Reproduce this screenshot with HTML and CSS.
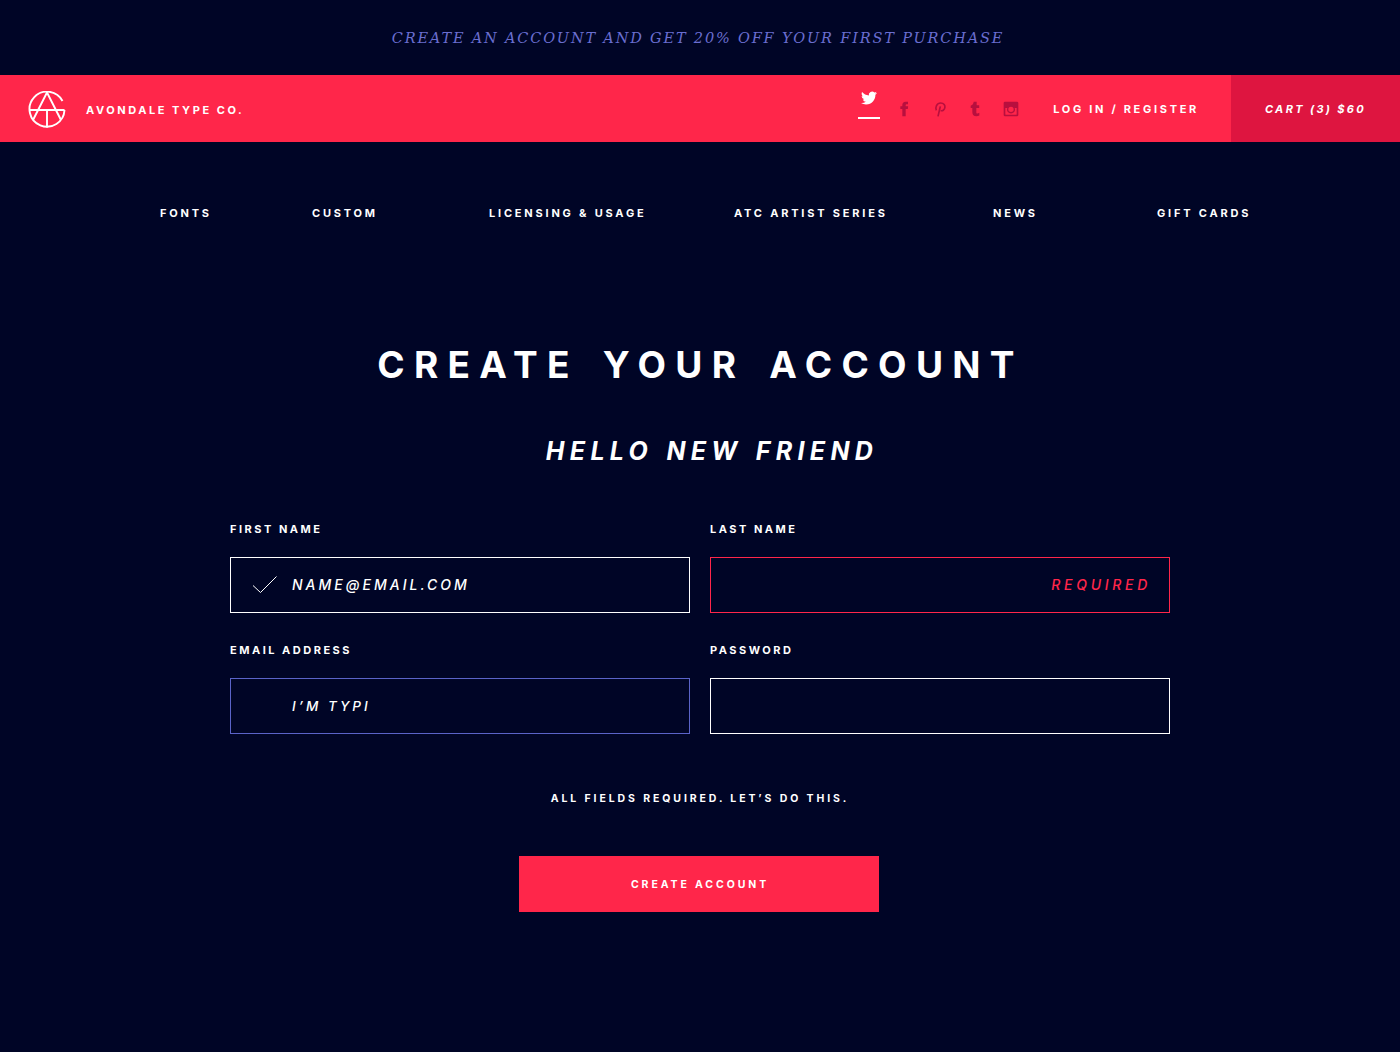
FILE: index.html
```html
<!DOCTYPE html>
<html lang="en">
<head>
  <meta charset="UTF-8">
  <title>Create your account</title>
  <link rel="stylesheet" href="styles.css">
</head>
<body>
<div class="promo">Create an account and get 20% off your first purchase</div>
<header class="topbar">
  <a class="brand" href="#">
    <svg class="logo" width="38" height="38" viewBox="0 0 38 38" fill="none" stroke="#fff" stroke-width="1.900">
      <path d="M34.500 10A17.500 17.500 0 1 0 36.500 19"/>
      <path d="M1.500 19H36.500"/>
      <path d="M19 1.500L5 29M19 1.500L33 29M19 19V36.500"/>
    </svg>
    <span class="brand-name">Avondale Type Co.</span>
  </a>
  <div class="social">
    <a class="social-link on" href="#">
      <svg width="16" height="16" viewBox="0 0 24 24"><path d="M23.950 4.570a10 10 0 0 1-2.820.780 4.960 4.960 0 0 0 2.160-2.720c-.950.550-2 .960-3.120 1.190a4.920 4.920 0 0 0-8.380 4.480C7.690 8.100 4.070 6.130 1.640 3.160a4.820 4.820 0 0 0-.670 2.480c0 1.710.870 3.210 2.190 4.100a4.900 4.900 0 0 1-2.230-.620v.060a4.920 4.920 0 0 0 3.950 4.830 5 5 0 0 1-2.210.080 4.940 4.940 0 0 0 4.600 3.420A9.870 9.870 0 0 1 0 19.540a14 14 0 0 0 7.560 2.210c9.050 0 14-7.500 14-13.980 0-.210 0-.420-.020-.630a9.940 9.940 0 0 0 2.460-2.550z"/></svg>
    </a>
    <a class="social-link" href="#">
      <svg width="16" height="16" viewBox="0 0 24 24"><path d="M14.500 8V6c0-.800.500-1.200 1.200-1.200H18V1h-3.500C11 1 9.500 3.300 9.500 6v2H6.500v4h3v11h5V12h3.200l.500-4z"/></svg>
    </a>
    <a class="social-link" href="#">
      <svg width="16" height="16" viewBox="0 0 24 24"><path class="pin" d="M6.500 14C4.500 10 7 3 13 3c5 0 7 3.500 6.300 7-.7 3.500-3.500 5.500-6.300 4.300M12.500 8L9 23"/></svg>
    </a>
    <a class="social-link" href="#">
      <svg width="16" height="16" viewBox="0 0 24 24"><path d="M14.500 1H10c-.2 2.800-1.500 5-4.500 6v3.500H8V17c0 3.800 2.200 6 6 6 1.600 0 3.200-.4 4.500-1.200v-4c-1 .7-2.100 1-3 1-1.200 0-1.500-.7-1.500-2v-6.300h4.300V6.500H14.500z"/></svg>
    </a>
    <a class="social-link" href="#">
      <svg width="16" height="16" viewBox="0 0 24 24"><path fill-rule="evenodd" d="M3 1h18a2 2 0 0 1 2 2v18a2 2 0 0 1-2 2H3a2 2 0 0 1-2-2V3a2 2 0 0 1 2-2zM3.500 10.500v9.500a.5.5 0 0 0 .5.500h16a.5.5 0 0 0 .5-.5v-9.500h-3a6 6 0 1 1-11 0zM12 8.500a4 4 0 1 1 0 8 4 4 0 0 1 0-8z"/></svg>
    </a>
  </div>
  <a class="login" href="#">Log in / Register</a>
  <a class="cart" href="#">Cart (3) $60</a>
</header>
<nav class="mainnav">
  <a href="#">Fonts</a>
  <a href="#">Custom</a>
  <a href="#">Licensing &amp; Usage</a>
  <a href="#">ATC Artist Series</a>
  <a href="#">News</a>
  <a href="#">Gift Cards</a>
</nav>
<main class="signup">
  <h1>Create your account</h1>
  <h2>Hello new friend</h2>
  <form class="form-grid">
    <div class="field">
      <label>First name</label>
      <div class="input">
        <svg class="check" width="26" height="18" viewBox="0 0 26 18" fill="none" stroke="#fff"><path d="M1 9.500L8.500 16.500L24.500 .5"/></svg>
        <span class="val">Name@email.com</span>
      </div>
    </div>
    <div class="field">
      <label>Last name</label>
      <div class="input error"><span class="msg">Required</span></div>
    </div>
    <div class="field">
      <label>Email address</label>
      <div class="input focus"><span class="val small">I’m typi</span></div>
    </div>
    <div class="field">
      <label>Password</label>
      <div class="input"></div>
    </div>
  </form>
  <p class="note">All fields required. Let’s do this.</p>
  <a class="btn" href="#">Create account</a>
</main>
</body>
</html>
```

FILE: styles.css
```css
body,div,h1,h2,p,form,label{margin:0;padding:0;}
body{background:#000526;color:#fff;font-family:"Inter","Liberation Sans",sans-serif;height:1052px;overflow:hidden;}
a{color:inherit;text-decoration:none;}

.promo{height:75px;text-align:center;text-transform:uppercase;font:italic 14.500px/76px "DejaVu Serif",serif;letter-spacing:1.830px;color:#6a6ed0;padding-right:4px;}

.topbar{height:67px;background:#ff264a;display:flex;align-items:center;}
.brand{display:flex;align-items:center;padding-left:28px;margin-right:auto;}
.logo{display:block;margin-top:2px;}
.brand-name{margin-left:20px;font-size:11px;font-weight:700;letter-spacing:2.550px;text-transform:uppercase;margin-top:2px;}
.social{display:flex;align-items:flex-start;gap:13.500px;height:40px;margin-right:31.500px;}
.social-link{width:22px;height:40px;display:flex;justify-content:center;padding-top:12px;box-sizing:border-box;fill:#b80f3e;}
.social-link.on{fill:#fff;border-bottom:2px solid #fff;height:30px;padding-top:1px;}
.pin{fill:none;stroke:#b80f3e;stroke-width:2.500;}
.login{font-size:11px;font-weight:700;letter-spacing:2.700px;text-transform:uppercase;margin-right:32px;}
.cart{width:169px;height:67px;line-height:69px;background:#de1540;text-align:center;font-size:11px;font-weight:700;font-style:italic;letter-spacing:2.350px;text-transform:uppercase;}

.mainnav{display:grid;grid-template-columns:152px 177px 245px 259px 164px auto;padding:64px 0 0 160px;font-size:11px;font-weight:700;letter-spacing:2.800px;line-height:14px;text-transform:uppercase;}

.signup{width:940px;margin:0 auto;padding-top:122px;}
h1{font-size:37px;line-height:46px;font-weight:700;letter-spacing:9.300px;word-spacing:6px;text-transform:uppercase;text-align:center;margin-left:1px;}
h2{font-size:25px;line-height:30px;font-weight:700;font-style:italic;letter-spacing:5.300px;word-spacing:2px;text-transform:uppercase;text-align:center;padding-left:24px;margin-top:48px;}
.form-grid{display:grid;grid-template-columns:460px 460px;gap:30px 20px;margin-top:56px;}
label{display:block;font-size:11px;font-weight:700;line-height:14px;letter-spacing:2.500px;text-transform:uppercase;margin-bottom:21px;}
.input{height:56px;box-sizing:border-box;border:1px solid #fff;display:flex;align-items:center;padding-left:21px;font-style:italic;font-weight:500;text-transform:uppercase;letter-spacing:3px;font-size:14px;}
.check{flex:none;margin-right:14px;}
.val,.msg{margin-bottom:2px;}
.val.small{font-size:13.500px;padding-left:40px;margin-bottom:0;}
.input.error{border-color:#ff264a;justify-content:flex-end;padding:0 18px 0 0;color:#ff264a;letter-spacing:3.700px;}
.input.focus{border-color:#5a63c8;}
.note{margin-top:58px;text-align:center;font-size:10.500px;line-height:14px;font-weight:700;letter-spacing:2.900px;text-transform:uppercase;}
.btn{display:block;width:360px;height:56px;line-height:57px;margin:50px 0 0 289px;background:#ff264a;text-align:center;text-indent:2px;font-size:10.500px;font-weight:700;letter-spacing:2.900px;text-transform:uppercase;}
```
